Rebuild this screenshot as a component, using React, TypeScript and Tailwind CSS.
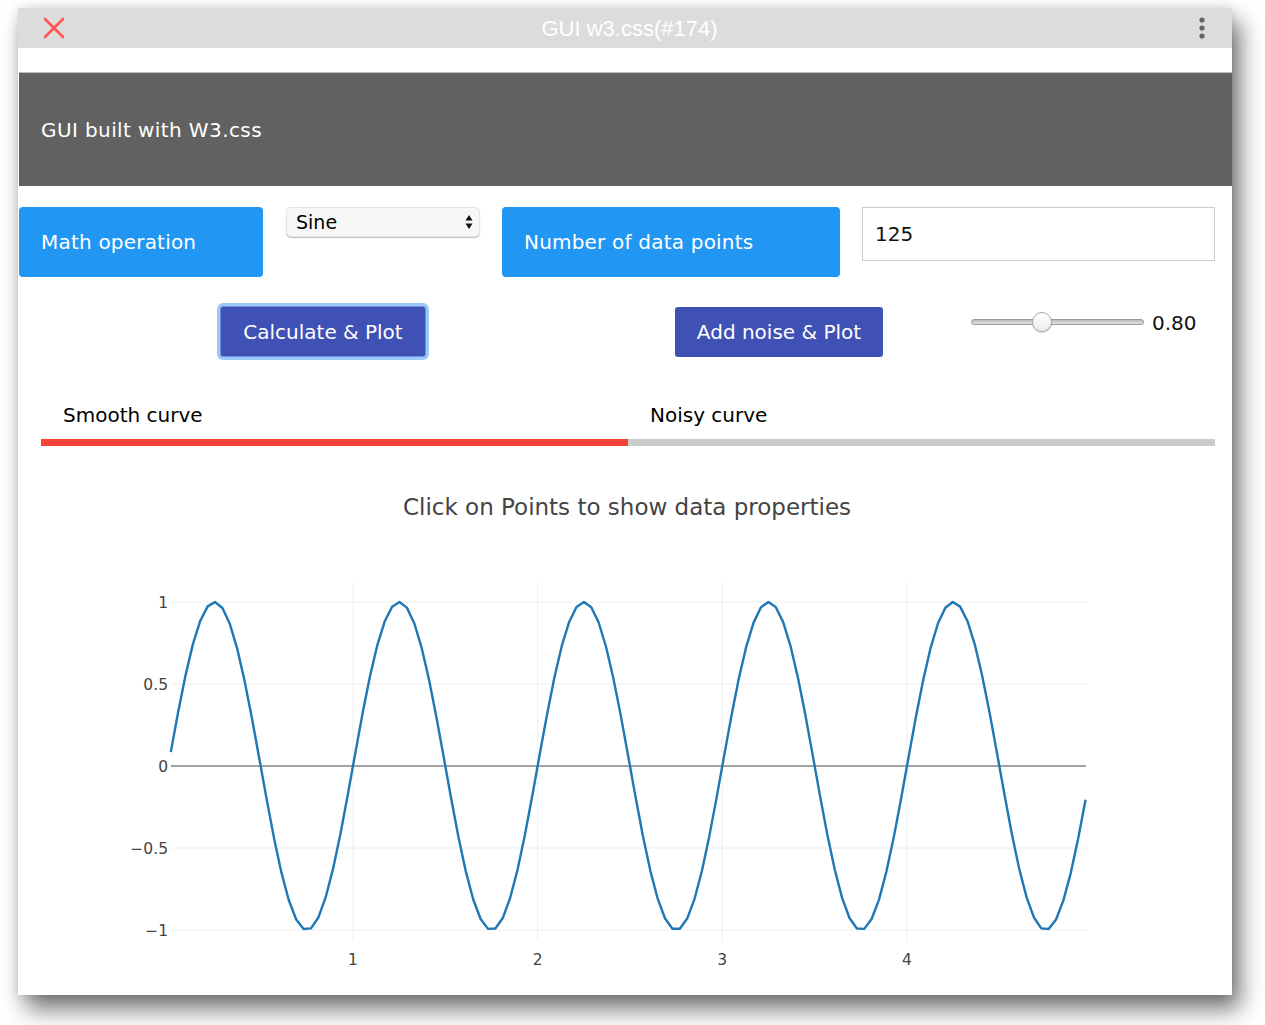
import React from "react";

const F = { fontFamily: '"DejaVu Sans", Verdana, sans-serif' };

function Chart() {
  const ox = 18;
  const oy = 540;
  const xp = (v: number) => 168.3 + 184.67 * v - ox;
  const yp = (v: number) => 765 - 164 * v - oy;
  const pts: string[] = [];
  const n = 125;
  const x0 = 0.0135;
  const x1 = 4.967;
  for (let i = 0; i < n; i++) {
    const x = x0 + ((x1 - x0) * i) / (n - 1);
    pts.push(`${xp(x).toFixed(2)},${yp(Math.sin(2 * Math.PI * x)).toFixed(2)}`);
  }
  const left = 171 - ox;
  const right = 1086 - ox;
  const yt = [
    { v: 1, l: "1" },
    { v: 0.5, l: "0.5" },
    { v: 0, l: "0" },
    { v: -0.5, l: "\u22120.5" },
    { v: -1, l: "\u22121" },
  ];
  return (
    <svg width={1214} height={455} className="block" style={F}>
      {[1, 2, 3, 4].map((v) => (
        <line key={v} x1={xp(v)} x2={xp(v)} y1={582 - oy} y2={940 - oy} stroke="#eeeeee" strokeWidth={1} />
      ))}
      {[1, 0.5, -0.5, -1].map((v) => (
        <line key={v} x1={left} x2={right} y1={yp(v)} y2={yp(v)} stroke="#eeeeee" strokeWidth={1} />
      ))}
      <line x1={left} x2={right} y1={yp(0)} y2={yp(0)} stroke="#444444" strokeWidth={1} />
      <polyline points={pts.join(" ")} fill="none" stroke="#1f77b4" strokeWidth={2.4} strokeLinejoin="round" />
      {yt.map((t) => (
        <text key={t.l} x={168 - ox} y={yp(t.v) + 5.5} textAnchor="end" fontSize={15.5} fill="#444">
          {t.l}
        </text>
      ))}
      {[1, 2, 3, 4].map((v) => (
        <text key={v} x={xp(v)} y={964 - oy} textAnchor="middle" fontSize={15.5} fill="#444">
          {v}
        </text>
      ))}
    </svg>
  );
}

export default function App() {
  return (
    <div className="w-[1265px] h-[1025px] bg-white overflow-hidden pt-[8px] pl-[18px]" style={F}>
      <div className="w-[1214px] h-[987px] bg-white shadow-[8px_14px_22px_rgba(0,0,0,0.55),0_0_10px_rgba(0,0,0,0.12)] flex flex-col overflow-hidden">
        {/* title bar */}
        <div className="h-[40px] bg-[#dcdcdc] flex items-center relative shrink-0">
          <svg width={22} height={22} className="ml-[25px]" viewBox="0 0 22 22">
            <path d="M2 2 L20 20 M20 2 L2 20" stroke="#ff5555" strokeWidth={2.6} strokeLinecap="round" />
          </svg>
          <div
            className="flex-1 text-center text-white text-[22px] pr-[4px]"
            style={{ fontFamily: '"Liberation Sans", Arial, sans-serif' }}
          >
            GUI w3.css(#174)
          </div>
          <svg width={8} height={24} className="mr-[26px]" viewBox="0 0 8 24">
            <circle cx={4} cy={4} r={2.6} fill="#666" />
            <circle cx={4} cy={12} r={2.6} fill="#666" />
            <circle cx={4} cy={20} r={2.6} fill="#666" />
          </svg>
        </div>
        {/* content */}
        <div className="pt-[24px]">
          <div className="ml-[1px] h-[114px] bg-[#616161] flex items-center pl-[22px] text-white text-[20px] tracking-[0.4px] border-t border-[#bdbdbd]">
            GUI built with W3.css
          </div>

          {/* row 1 */}
          <div className="flex items-start mt-[21px] pl-[1px]">
            <div className="w-[244px] h-[70px] bg-[#2196f3] rounded-[4px] flex items-center pl-[22px] text-white text-[20px] tracking-[0.2px]">
              Math operation
            </div>
            <div className="ml-[23px] w-[194px] h-[30px] bg-[#f7f7f7] rounded-[5px] shadow-[0_1px_1px_rgba(0,0,0,0.25)] border border-[#e4e4e4] flex items-center justify-between pl-[9px] pr-[6px] text-[19px] text-black">
              <span>Sine</span>
              <svg width={8} height={16} viewBox="0 0 8 16">
                <path d="M4 1 L7.5 6.5 L0.5 6.5 Z" fill="#111" />
                <path d="M4 15 L7.5 9.5 L0.5 9.5 Z" fill="#111" />
              </svg>
            </div>
            <div className="ml-[22px] w-[338px] h-[70px] bg-[#2196f3] rounded-[4px] flex items-center pl-[22px] text-white text-[20px] tracking-[0.2px]">
              Number of data points
            </div>
            <div className="ml-[22px] w-[353px] h-[54px] border border-[#cccccc] flex items-center pl-[12px] text-[20px] text-[#111]">
              125
            </div>
          </div>

          {/* row 2 */}
          <div className="flex items-start mt-[26px]">
            <div className="ml-[199px] p-[3px] rounded-[6px] bg-[#9ccaf8]">
              <div className="w-[206px] h-[51px] bg-[#3f51b5] rounded-[3px] border border-[#6f8fe6] flex items-center justify-center text-white text-[20px]">
                Calculate &amp; Plot
              </div>
            </div>
            <div className="ml-[246px] mt-[4px] w-[208px] h-[50px] bg-[#3f51b5] rounded-[3px] flex items-center justify-center text-white text-[20px]">
              Add noise &amp; Plot
            </div>
            <div className="ml-[88px] mt-[2px] flex items-center">
              <div className="relative w-[173px] h-[22px] flex items-center">
                <div className="w-full h-[6px] rounded-full bg-gradient-to-b from-[#b8b8b8] to-[#e6e6e6] border border-[#9a9a9a]" />
                <div className="absolute left-[61px] top-[1px] w-[20px] h-[20px] rounded-full bg-gradient-to-b from-white to-[#ececec] border border-[#a8a8a8] shadow-[0_1px_1px_rgba(0,0,0,0.2)]" />
              </div>
              <span className="ml-[8px] text-[20px] text-[#111] mt-[3px]">0.80</span>
            </div>
          </div>

          {/* tabs */}
          <div className="ml-[23px] w-[1174px] mt-[38px]">
            <div className="flex text-[20px] text-black h-[33px] items-center">
              <div className="w-[587px] pl-[22px]">Smooth curve</div>
              <div className="pl-[22px]">Noisy curve</div>
            </div>
            <div className="flex h-[7px] mt-[8px]">
              <div className="w-[587px] bg-[#f44336]" />
              <div className="flex-1 bg-[#cccccc]" />
            </div>
          </div>

          {/* chart title */}
          <div className="mt-[48px] text-center text-[23px] text-[#444] pl-[4px] leading-[26px]">
            Click on Points to show data properties
          </div>
          <div className="mt-[21px]">
            <Chart />
          </div>
        </div>
      </div>
    </div>
  );
}
